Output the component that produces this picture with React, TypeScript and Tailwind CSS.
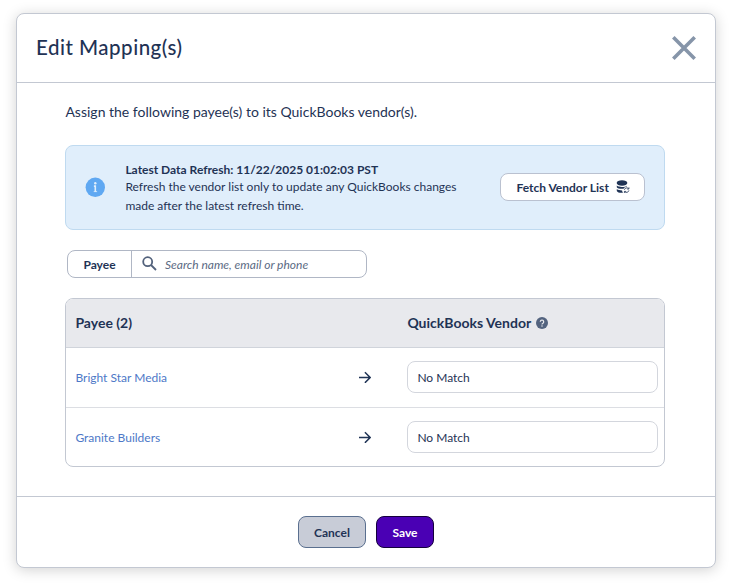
import React from 'react';

const payees = ['Bright Star Media', 'Granite Builders'];

const CloseIcon: React.FC = () => (
  <svg className="w-6 h-6" viewBox="0 0 24 24" fill="none" stroke="#8695a9" strokeWidth="3.6">
    <path d="M1.3 1.3 22.7 22.7M22.7 1.3 1.3 22.7" />
  </svg>
);

const InfoIcon: React.FC = () => (
  <svg className="w-5 h-5" viewBox="0 0 20 20">
    <circle cx="10.3" cy="10.3" r="9.7" fill="#5fa8f2" />
    <circle cx="10.3" cy="6.2" r="1.2" fill="#e0eefb" />
    <path d="M8.900 9.1h1.400v5.6" fill="none" stroke="#e0eefb" strokeWidth="1.6" />
    <path d="M8.7 14.6h3.4" fill="none" stroke="#e0eefb" strokeWidth=".8" />
  </svg>
);

const DatabaseIcon: React.FC = () => (
  <svg className="w-[14px] h-[14px]" viewBox="0 0 14 14" fill="#1f3355">
    <ellipse cx="6" cy="3" rx="5.3" ry="2.7" />
    <path d="M.8 5.6c1.200 1 3 1.400 5.200 1.400s3.800-.3 4.900-1.200v.8c-1.500.3-2.700 1-3.400 2.200C4 9 1.500 8.500.8 7.200zM.8 9c1.200 1 3 1.400 5.300 1.400.1.900.4 1.700.9 2.400-3 .3-5.600-.4-6.200-1.900z" />
    <path d="M8.300 9.800a2.500 2.500 0 0 1 4.300-1.100M12.900 7.300v1.700h-1.800M12.900 10.400a2.500 2.500 0 0 1-4.300 1.200M8.400 13v-1.600h1.700" fill="none" stroke="#1f3355" strokeWidth=".8" />
  </svg>
);

const SearchIcon: React.FC = () => (
  <svg className="w-[15px] h-[15px]" viewBox="0 0 15 15" fill="none" stroke="#53627c" strokeWidth="1.8">
    <circle cx="5.7" cy="5.7" r="4.5" />
    <path d="m9 9 5 5" />
  </svg>
);

const HelpIcon: React.FC = () => (
  <svg className="w-3 h-3" viewBox="0 0 12 12">
    <circle cx="6" cy="6" r="6" fill="#53637f" />
    <path d="M4.3 4.7a1.7 1.7 0 1 1 2.600 1.500c-.6.3-.9.600-.9 1.200" fill="none" stroke="#e8e9ed" strokeWidth="1.2" />
    <circle cx="6" cy="9" r=".75" fill="#e8e9ed" />
  </svg>
);

const ArrowIcon: React.FC = () => (
  <svg className="w-3 h-3" viewBox="0 0 12 12" fill="none" stroke="#1f3355" strokeWidth="1.5">
    <path d="M0 6.500h11M5.900 1.200l5.300 5.300-5.300 5.300" />
  </svg>
);

export default function App() {
  return (
    <div className="h-[587px] bg-white pl-4 pt-[13px] font-['Lato',sans-serif] text-[#1f3355]">
      <div className="flex h-[555px] w-[700px] flex-col rounded-lg border border-[#c3c8d2] bg-white shadow-[0_2px_14px_rgba(0,0,0,0.18)]">
        <header className="flex h-[69px] items-center justify-between border-b border-[#c3c8d2] pl-[19px] pr-[19px]">
          <h1 className="pb-0.5 text-[20.5px] font-medium leading-6 tracking-[0.5px]">Edit Mapping(s)</h1>
          <button aria-label="Close">
            <CloseIcon />
          </button>
        </header>

        <main className="h-[414px] px-[48.4px] pt-[19px]">
          <p className="text-[14px] leading-5">Assign the following payee(s) to its QuickBooks vendor(s).</p>

          <section className="mt-[23px] flex h-[85px] w-[600px] items-center rounded-lg border border-[#bfdaf0] bg-[#e0eefb] pl-[19px] pr-[19px]">
            <InfoIcon />
            <div className="ml-5 w-[360px] pt-[3px] text-[12px]">
              <p className="font-bold leading-[15px]">Latest Data Refresh: 11/22/2025 01:02:03 PST</p>
              <p className="leading-[19px]">
                Refresh the vendor list only to update any QuickBooks changes
                <br />
                made after the latest refresh time.
              </p>
            </div>
            <button className="ml-auto flex h-7 w-[145px] items-center justify-between rounded-lg border border-[#bac1d0] bg-white pl-[15px] pr-[14px] text-[12px] font-bold">
              <span className="pt-0.5">Fetch Vendor List</span>
              <DatabaseIcon />
            </button>
          </section>

          <div className="ml-[1.6px] mt-5 flex h-7 w-[300px] rounded-lg border border-[#b0b7c5] text-[12px]">
            <div className="flex w-[64px] items-center justify-center border-r border-[#b0b7c5] pt-0.5 font-bold">Payee</div>
            <div className="flex items-center gap-2 pl-[10px]">
              <SearchIcon />
              <span className="pt-0.5 italic text-[#5b6a83]">Search name, email or phone</span>
            </div>
          </div>

          <section className="mt-5 w-[600px] overflow-hidden rounded-lg border border-[#c3c8d2]">
            <div className="flex h-[49px] items-center border-b border-[#d0d4db] bg-[#e8e9ed] text-[14px] font-bold">
              <div className="w-[341px] pl-[9px]">Payee (2)</div>
              <div className="flex items-center gap-[5px]">
                QuickBooks Vendor
                <HelpIcon />
              </div>
            </div>
            {payees.map((name) => (
              <div key={name} className="flex h-[60px] items-center border-b border-[#dcdee3] pl-[9px] text-[12px] last:h-[58px] last:border-b-0">
                <a className="w-[284px] pt-0.5 text-[#4d78c7]">{name}</a>
                <ArrowIcon />
                <div className="ml-9 flex h-8 w-[251px] items-center rounded-lg border border-[#d3d6dd] pl-[9px] pt-0.5">No Match</div>
              </div>
            ))}
          </section>
        </main>

        <footer className="flex h-[71px] items-center justify-center gap-[10px] border-t border-[#c3c8d2] text-[12px] font-bold">
          <button className="h-8 w-[68px] rounded-lg border border-[#5a6f8f] bg-[#c8ccd7] pt-px">Cancel</button>
          <button className="h-8 w-[58px] rounded-lg border border-[#14003d] bg-[#4a00b4] pt-px text-white">Save</button>
        </footer>
      </div>
    </div>
  );
}
